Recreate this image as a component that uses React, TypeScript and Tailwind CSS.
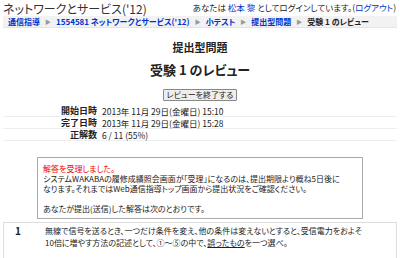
import React from 'react';

const font = "font-['Noto_Sans_CJK_JP',sans-serif] [font-feature-settings:'palt']";

function Arrow() {
  return <span className="mx-[5px] text-[6px] text-[#999]">▶</span>;
}

export default function App() {
  return (
    <div className={`w-[400px] h-[258px] overflow-hidden bg-white text-[#222] ${font}`}>
      {/* Header */}
      <div className="relative px-[3px] pt-[2px] h-[16px]">
        <h1 className="text-[12px] leading-[14px] font-normal text-[#333] whitespace-nowrap">ネットワークとサービス('12)</h1>
        <div className="absolute right-[4px] top-[1px] text-[8.5px] leading-[12px] whitespace-nowrap">
          あなたは <a className="text-[#0033cc]">松本 黎</a> としてログインしています。(<a className="text-[#0033cc]">ログアウト</a>)
        </div>
      </div>

      {/* Breadcrumb */}
      <div className="mx-[3px] flex items-center h-[12px] px-[5px] bg-[#f2f2f2] border-b border-[#e4e4e4] text-[8px] font-bold whitespace-nowrap">
        <a className="text-[#0033cc]">通信指導</a>
        <Arrow />
        <a className="text-[#0033cc]">1554581 ネットワークとサービス('12)</a>
        <Arrow />
        <a className="text-[#0033cc]">小テスト</a>
        <Arrow />
        <a className="text-[#0033cc]">提出型問題</a>
        <Arrow />
        <span className="text-[#222]">受験 1 のレビュー</span>
      </div>

      {/* Headings */}
      <h2 className="mt-[12px] text-center text-[11px] leading-[14px] font-bold">提出型問題</h2>
      <h3 className="mt-[8px] text-center text-[13px] leading-[16px] font-bold">受験 1 のレビュー</h3>

      <div className="mt-[11px] flex justify-center">
        <button className="h-[12px] px-[3px] text-[8px] leading-[10px] border border-[#888] bg-[#eeeeee] rounded-[1px]">
          レビューを終了する
        </button>
      </div>

      {/* Summary table */}
      <div className="mt-[4px] mx-[3px] text-[8.5px]">
        {[
          ['開始日時', '2013年 11月 29日(金曜日) 15:10'],
          ['完了日時', '2013年 11月 29日(金曜日) 15:28'],
          ['正解数', '6 / 11 (55%)'],
        ].map(([k, v]) => (
          <div key={k} className="flex border-b border-[#eeeeee] h-[12px] leading-[10px] items-center">
            <div className="w-[99px] text-right font-bold text-[9px] pr-[5px]">{k}</div>
            <div>{v}</div>
          </div>
        ))}
      </div>

      {/* Message box */}
      <div className="mt-[16px] mx-[37px] border border-[#aaaaaa] px-[5px] pt-[6px] pb-[4px] text-[8px] leading-[10px] whitespace-nowrap">
        <div className="text-[#ee0000]">解答を受理しました。</div>
        <div>システムWAKABAの履修成績照会画面が「受理」になるのは、提出期限より概ね5日後に</div>
        <div>なります。それまではWeb通信指導トップ画面から提出状況をご確認ください。</div>
        <div className="h-[10px]" />
        <div>あなたが提出(送信)した解答は次のとおりです。</div>
      </div>

      {/* Question */}
      <div className="mt-[3px] mx-[3px] h-[60px] border border-[#dddddd] flex text-[8px] leading-[12px] pt-[2px] whitespace-nowrap">
        <div className="w-[41px] pl-[11px] font-bold text-[10px]">1</div>
        <div>
          <div>無線で信号を送るとき、一つだけ条件を変え、他の条件は変えないとすると、受信電力をおよそ</div>
          <div>10倍に増やす方法の記述として、①〜⑤の中で、<span className="underline">誤ったもの</span>を一つ選べ。</div>
        </div>
      </div>
    </div>
  );
}
